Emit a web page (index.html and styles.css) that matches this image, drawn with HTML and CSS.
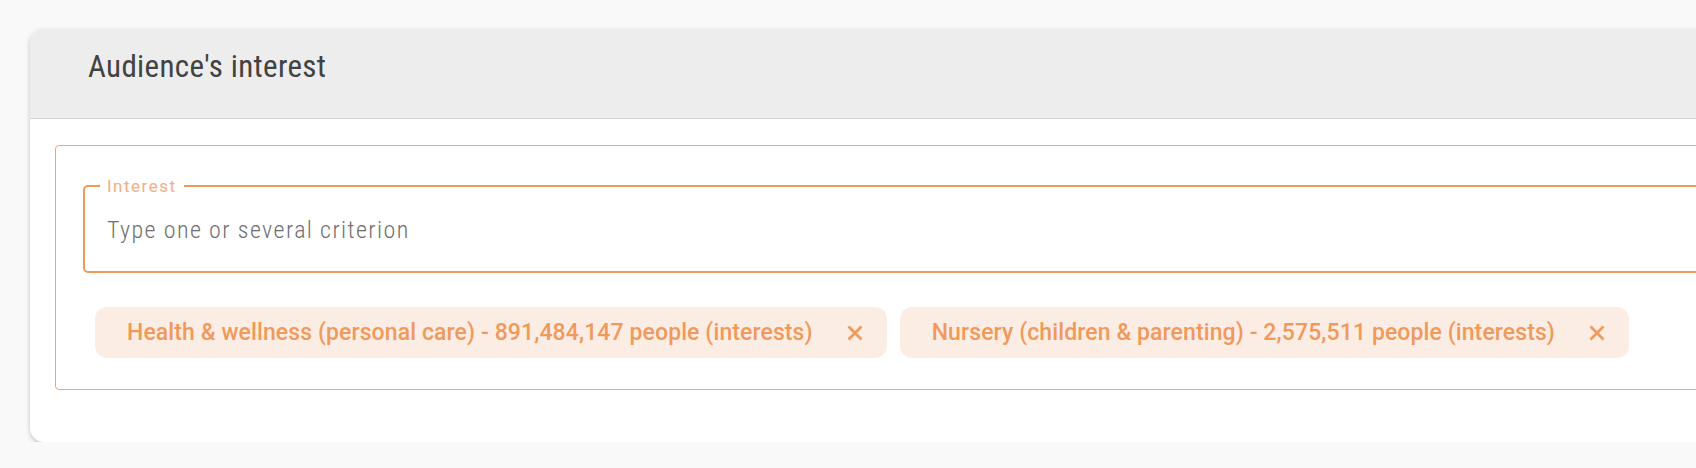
FILE: index.html
```html
<!DOCTYPE html>
<html lang="en">
<head>
<meta charset="utf-8">
<title>Audience's interest</title>
<link rel="stylesheet" href="styles.css">
</head>
<body>
<div class="page">
  <section class="card">
    <header class="card-header">
      <h2 class="card-title">Audience's interest</h2>
    </header>
    <div class="card-body">
      <div class="interest-box">
        <fieldset class="field">
          <legend class="field-label">Interest</legend>
          <input class="field-input" type="text" placeholder="Type one or several criterion">
        </fieldset>
        <div class="chips">
          <span class="chip">
            <span class="chip-text">Health &amp; wellness (personal care) - 891,484,147 people (interests)</span>
            <svg class="chip-close" viewBox="0 0 16 16" width="16" height="16" aria-hidden="true"><path d="M1.5 1.5 L14.5 14.5 M14.5 1.5 L1.5 14.5"/></svg>
          </span>
          <span class="chip">
            <span class="chip-text">Nursery (children &amp; parenting) - 2,575,511 people (interests)</span>
            <svg class="chip-close" viewBox="0 0 16 16" width="16" height="16" aria-hidden="true"><path d="M1.5 1.5 L14.5 14.5 M14.5 1.5 L1.5 14.5"/></svg>
          </span>
        </div>
      </div>
    </div>
  </section>
</div>
</body>
</html>
```
FILE: styles.css
```css
* { box-sizing: border-box; }

html, body {
  margin: 0;
  background: #f9f9f9;
  overflow: hidden;
  font-family: Roboto, "Liberation Sans", sans-serif;
}

.page {
  padding: 29px 0 0 30px;
  width: 1900px;
}

.card {
  width: 1800px;
  background: #ffffff;
  border-radius: 14px;
  box-shadow: 0 2px 5px rgba(0, 0, 0, 0.22);
  overflow: hidden;
}

.card-header {
  height: 90px;
  background: #ededed;
  border-bottom: 1px solid #d4d4d4;
  padding: 20px 0 0 58px;
}

.card-title {
  margin: 0;
  font-size: 31px;
  line-height: 36px;
  font-weight: 400;
  font-stretch: 85%;
  letter-spacing: 0.35px;
  color: #424242;
}

.card-body {
  padding: 26px 0 52px 25px;
}

.interest-box {
  border: 1px solid #f0a574;
  border-radius: 4px;
  padding: 31px 0 31px 27px;
}

.field {
  margin: 0;
  border: 2px solid #f0995b;
  border-radius: 5px;
  padding: 0 15px 0 15px;
  height: 96px;
}

.field-label {
  padding: 0 7px;
  font-size: 17px;
  line-height: 18px;
  letter-spacing: 1.5px;
  color: #f4ae82;
}

.field-input {
  display: block;
  width: 100%;
  border: 0;
  outline: none;
  background: transparent;
  margin: 15px 0 0 7px;
  padding: 0;
  font-family: Roboto, "Liberation Sans", sans-serif;
  font-size: 24px;
  font-weight: 300;
  font-stretch: 85%;
  letter-spacing: 1.4px;
  line-height: 40px;
  height: 40px;
  color: #616161;
}

.field-input::placeholder {
  color: #6f6f6f;
  opacity: 1;
}

.chips {
  display: flex;
  gap: 13px;
  margin: 34px 0 0 12px;
}

.chip {
  display: inline-flex;
  align-items: center;
  gap: 34px;
  height: 51px;
  padding: 0 24px 0 32px;
  border-radius: 12px;
  background: #fcede4;
  color: #f0995b;
}

.chip-text {
  font-size: 23px;
  font-weight: 500;
  letter-spacing: 0.1px;
  white-space: nowrap;
}

.chip-close {
  flex: none;
  stroke: #f0995b;
  stroke-width: 2.8;
  stroke-linecap: butt;
  fill: none;
}
```
